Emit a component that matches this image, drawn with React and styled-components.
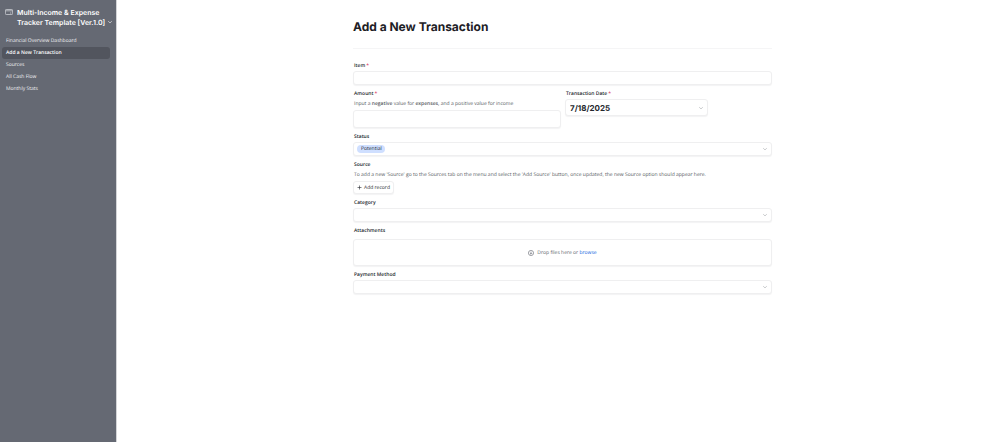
import React from "react";
import styled, { createGlobalStyle, css } from "styled-components";

const GlobalStyle = createGlobalStyle`
  *, *::before, *::after { box-sizing: border-box; }
  body {
    margin: 0;
    background: #fff;
    color: #23272d;
    font: 400 5px/8px "Open Sans", "Noto Sans", sans-serif;
    text-rendering: geometricPrecision;
  }
  button, input, select { font: inherit; color: inherit; text-rendering: inherit; }
`;

const Page = styled.div`
  display: flex;
  min-height: 100vh;
`;

const Sidebar = styled.aside`
  flex: none;
  width: 117px;
  padding: 8px 6px 8px 2px;
  background: #656973;
  border-right: 1px solid #d3d4d7;
  color: #f1f2f3;
`;

const Brand = styled.div`
  display: flex;
  gap: 4px;
  padding-left: 3px;
  margin-bottom: 7px;
`;

const CardIcon = styled.svg`
  flex: none;
  width: 8px;
  height: 6px;
  margin-top: 1px;
`;

const BrandName = styled.button`
  padding: 0;
  border: 0;
  background: none;
  color: #fff;
  text-align: left;
  white-space: nowrap;
  font: 600 7px/10px Inter, sans-serif;
`;

const Menu = styled.nav`
  display: flex;
  flex-direction: column;
`;

const MenuLink = styled.a`
  padding: 0 4px;
  border-radius: 3px;
  line-height: 12px;
  color: inherit;
  text-decoration: none;
  ${(p) => p.$active && css`
    background: #52555e;
    color: #fff;
    font-weight: 600;
  `}
`;

const Main = styled.main`
  flex: 1;
  min-width: 0;
  padding: 18px 8px 24px 11px;
`;

const Form = styled.form`
  width: 100%;
  max-width: 419px;
  margin: 0 auto;
`;

const Title = styled.h1`
  margin: 0 0 13px;
  padding-bottom: 12px;
  border-bottom: 1px solid #f5f5f6;
  font: 700 12px/18px Inter, sans-serif;
  color: #1d2025;
`;

const Field = styled.div`
  display: flex;
  flex-direction: column;
  margin-bottom: 5px;
`;

const Label = styled.label`
  margin-bottom: ${(p) => (p.$roomy ? 4 : 1)}px;
  padding-left: 1px;
  font-weight: 600;
`;

const Star = styled.span`
  margin-left: 1px;
  color: #dc3a5c;
`;

const Hint = styled.p`
  margin: 1px 0 2px;
  padding-left: 1px;
  color: #565a61;
  b { font-weight: 600; }
`;

const boxed = css`
  width: 100%;
  border: 1px solid #efeff0;
  border-radius: 3px;
  background: #fff;
  box-shadow: 0 1px 1px #f3f3f4;
`;

const TextInput = styled.input`
  ${boxed}
  height: ${(p) => p.$height || 14}px;
  padding: 0 4px;
`;

const PickerBox = styled.div`
  ${boxed}
  display: flex;
  align-items: center;
  height: ${(p) => p.$height || 14}px;
  padding: 0 3px;
`;

const PlainSelect = styled.select`
  flex: 1;
  height: 10px;
  padding: 0;
  border: 0;
  appearance: none;
  background: none;
`;

const PillSelect = styled.select`
  width: 28px;
  height: 8px;
  margin-right: auto;
  padding: 0 0 0 4px;
  border: 0;
  border-radius: 4px;
  appearance: none;
  background: #cfdfff;
  line-height: 8px;
`;

const DateInput = styled.input`
  flex: 1;
  min-width: 0;
  padding: 0 1px;
  border: 0;
  background: none;
  font: 700 8px/12px Inter, sans-serif;
`;

const Pair = styled.div`
  display: flex;
  align-items: flex-start;
  gap: 4px;
`;

const Column = styled(Field)`
  flex: none;
  width: ${(p) => p.$width}px;
`;

const AddButton = styled.button`
  ${boxed}
  display: flex;
  align-items: center;
  align-self: flex-start;
  gap: 2px;
  width: auto;
  height: 13px;
  padding: 0 3px;
  white-space: nowrap;
`;

const DropZone = styled.div`
  ${boxed}
  display: flex;
  align-items: center;
  justify-content: center;
  gap: 3px;
  height: 27px;
  color: #63676e;
`;

const Browse = styled.a`
  color: #1565e0;
  text-decoration: none;
`;

const Glyph = styled.svg`
  flex: none;
  width: ${(p) => p.$size}px;
  height: ${(p) => p.$size}px;
  fill: none;
  stroke: currentColor;
  stroke-width: 0.6;
`;

const Arrow = styled.span`
  display: flex;
  color: #a4a7ab;
`;

const Chevron = () => (
  <Glyph $size={6} viewBox="0 0 6 6" aria-hidden="true">
    <path d="M1.2 2.2 3 3.9 4.8 2.2" />
  </Glyph>
);

const links = ["Financial Overview Dashboard", "Add a New Transaction", "Sources", "All Cash Flow", "Monthly Stats"];

export default function App() {
  return (
    <Page>
      <GlobalStyle />
      <Sidebar>
        <Brand>
          <CardIcon viewBox="0 0 8 6" fill="none" stroke="#d9dbdf" strokeWidth=".7" aria-hidden="true">
            <rect x=".4" y=".5" width="7.2" height="5" rx=".8" />
            <path d="M.4 1.8h7.2M5 4h1.3" />
          </CardIcon>
          <BrandName type="button">
            Multi-Income &amp; Expense<br />Tracker Template [Ver.1.0] <Chevron />
          </BrandName>
        </Brand>
        <Menu>
          {links.map((name, i) => (
            <MenuLink key={name} href="#" $active={i === 1}>{name}</MenuLink>
          ))}
        </Menu>
      </Sidebar>
      <Main>
        <Form>
          <Title>Add a New Transaction</Title>
          <Field>
            <Label htmlFor="item">Item<Star>*</Star></Label>
            <TextInput id="item" />
          </Field>
          <Pair>
            <Column $width={208}>
              <Label htmlFor="amount">Amount<Star>*</Star></Label>
              <Hint>Input a <b>negative</b> value for <b>expenses,</b> and a positive value for income</Hint>
              <TextInput id="amount" $height={18} />
            </Column>
            <Column $width={143}>
              <Label htmlFor="date">Transaction Date<Star>*</Star></Label>
              <PickerBox $height={17}>
                <DateInput id="date" defaultValue="7/18/2025" />
                <Arrow><Chevron /></Arrow>
              </PickerBox>
            </Column>
          </Pair>
          <Field>
            <Label htmlFor="status">Status</Label>
            <PickerBox>
              <PillSelect id="status"><option>Potential</option></PillSelect>
              <Arrow><Chevron /></Arrow>
            </PickerBox>
          </Field>
          <Field>
            <Label htmlFor="source">Source</Label>
            <Hint>To add a new 'Source' go to the Sources tab on the menu and select the 'Add Source' button, once updated, the new Source option should appear here.</Hint>
            <AddButton id="source" type="button">
              <Glyph $size={5} viewBox="0 0 5 5" aria-hidden="true">
                <path d="M2.5.5v4M.5 2.5h4" />
              </Glyph>
              Add record
            </AddButton>
          </Field>
          <Field>
            <Label htmlFor="category">Category</Label>
            <PickerBox><PlainSelect id="category" /><Arrow><Chevron /></Arrow></PickerBox>
          </Field>
          <Field>
            <Label as="span" $roomy>Attachments</Label>
            <DropZone>
              <Glyph $size={6} viewBox="0 0 6 6" aria-hidden="true">
                <circle cx="3" cy="3" r="2.6" />
                <path d="M3 1.6v2.6M1.9 3.1 3 4.2l1.1-1.1" />
              </Glyph>
              <span>Drop files here or <Browse href="#">browse</Browse></span>
            </DropZone>
          </Field>
          <Field>
            <Label htmlFor="payment">Payment Method</Label>
            <PickerBox><PlainSelect id="payment" /><Arrow><Chevron /></Arrow></PickerBox>
          </Field>
        </Form>
      </Main>
    </Page>
  );
}
